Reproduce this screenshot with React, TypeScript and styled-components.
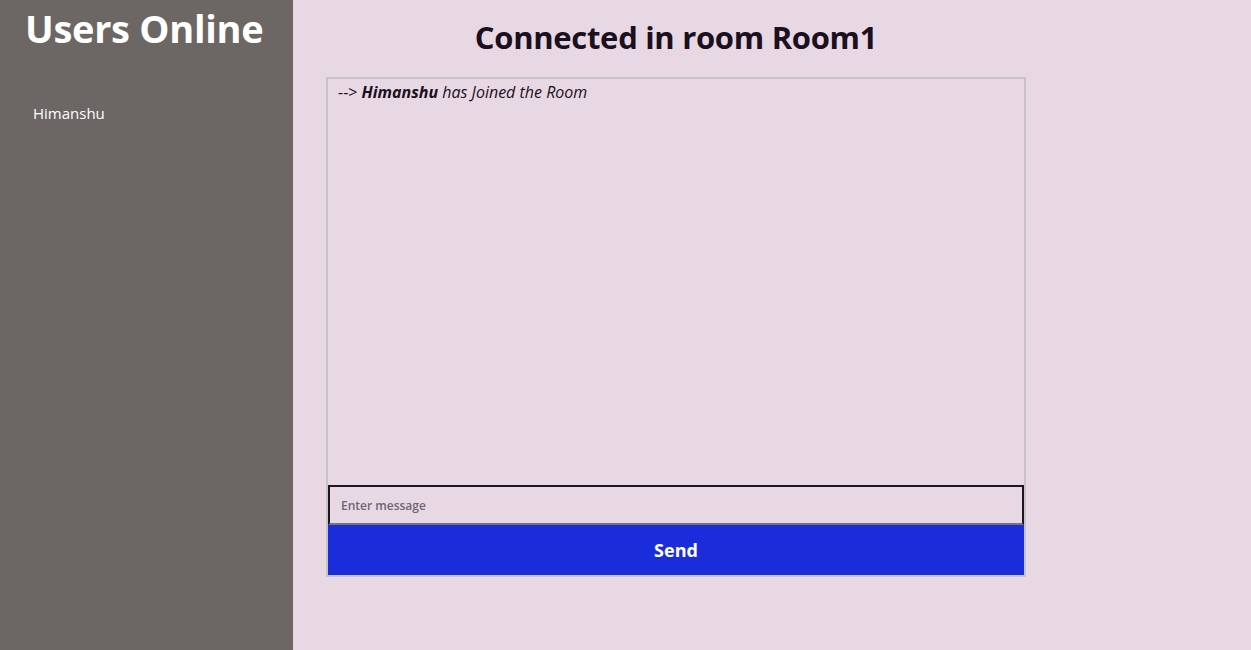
import React from "react";
import styled, { createGlobalStyle } from "styled-components";

const Global = createGlobalStyle`
  html, body { margin: 0; padding: 0; }
  body { font-family: "Open Sans", "Noto Sans", sans-serif; background: #e8d8e3; }
`;

const Page = styled.div`
  display: flex;
  width: 1251px;
  height: 650px;
  overflow: hidden;
`;

const Sidebar = styled.aside`
  width: 293px;
  background: #6c6665;
  color: #fff;
  display: flex;
  flex-direction: column;
`;

const SideTitle = styled.h1`
  margin: 0;
  padding: 4px 0 0 25px;
  font-size: 38px;
  font-weight: 700;
  letter-spacing: -0.3px;
  line-height: 48px;
`;

const UserList = styled.ul`
  list-style: none;
  margin: 0;
  padding: 51px 0 0 33px;
`;

const UserItem = styled.li`
  font-size: 15px;
  line-height: 20px;
`;

const Main = styled.main`
  flex: 1;
  padding-left: 33px;
  display: flex;
  flex-direction: column;
`;

const Column = styled.div`
  width: 700px;
  display: flex;
  flex-direction: column;
`;

const Title = styled.h2`
  margin: 0;
  padding-top: 16px;
  height: 77px;
  box-sizing: border-box;
  text-align: center;
  font-size: 31px;
  font-weight: 700;
  letter-spacing: -0.3px;
  color: #1a1020;
  line-height: 42px;
`;

const ChatBox = styled.div`
  height: 500px;
  box-sizing: border-box;
  border: 2px solid #c6c3c8;
  display: flex;
  flex-direction: column;
`;

const Messages = styled.div`
  flex: 1;
  padding: 2px 10px;
`;

const Message = styled.p`
  margin: 0;
  font-size: 16px;
  font-style: italic;
  color: #1a1020;
  line-height: 22px;
`;

const Arrow = styled.span`
  font-style: normal;
`;

const Input = styled.input`
  height: 40px;
  box-sizing: border-box;
  border: 2px solid #1b1620;
  border-bottom-color: #77737a;
  background: #e8d8e3;
  padding: 0 11px;
  font-family: inherit;
  font-size: 12px;
  font-weight: 600;
  outline: none;
  &::placeholder { color: #6e6676; }
`;

const SendButton = styled.button`
  height: 50px;
  border: none;
  background: #1b2ddb;
  color: #fff;
  font-family: inherit;
  font-size: 18px;
  font-weight: 700;
  cursor: pointer;
`;

export default function App() {
  return (
    <>
      <Global />
      <Page>
        <Sidebar>
          <SideTitle>Users Online</SideTitle>
          <UserList>
            <UserItem>Himanshu</UserItem>
          </UserList>
        </Sidebar>
        <Main>
          <Column>
            <Title>Connected in room Room1</Title>
            <ChatBox>
              <Messages>
                <Message>
                  <Arrow>--&gt;</Arrow> <b>Himanshu</b> has Joined the Room
                </Message>
              </Messages>
              <Input placeholder="Enter message" />
              <SendButton>Send</SendButton>
            </ChatBox>
          </Column>
        </Main>
      </Page>
    </>
  );
}
